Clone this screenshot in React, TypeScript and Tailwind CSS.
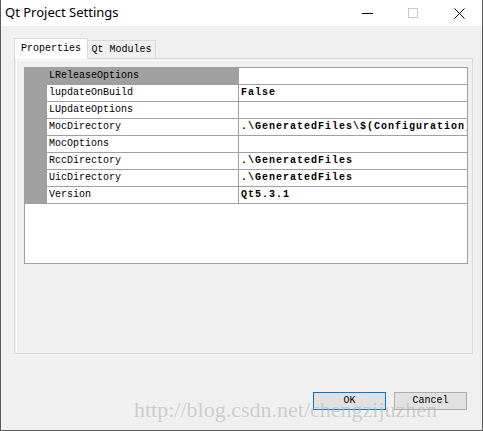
import React from "react";

const rows = [
  { name: "LReleaseOptions", value: "" },
  { name: "lupdateOnBuild", value: "False" },
  { name: "LUpdateOptions", value: "" },
  { name: "MocDirectory", value: ".\\GeneratedFiles\\$(Configuration)" },
  { name: "MocOptions", value: "" },
  { name: "RccDirectory", value: ".\\GeneratedFiles" },
  { name: "UicDirectory", value: ".\\GeneratedFiles" },
  { name: "Version", value: "Qt5.3.1" },
];

const mono = { fontFamily: '"Liberation Mono", "DejaVu Sans Mono", monospace' };

const App = () => {
  return (
    <div className="relative w-[483px] h-[431px] flex flex-col bg-[#f0f0f0] border-x border-b border-[#5b5b5b] overflow-hidden">
      {/* title bar */}
      <div className="h-[26px] bg-white flex items-center shrink-0">
        <span
          className="pl-[4px] text-[13px] text-black flex-1"
          style={{ fontFamily: '"Noto Sans", "Liberation Sans", sans-serif' }}
        >
          Qt Project Settings
        </span>
        <div className="flex h-full">
          <div className="w-[46px] flex items-center justify-center">
            <div className="w-[11px] h-px bg-black" />
          </div>
          <div className="w-[46px] flex items-center justify-center">
            <div className="w-[10px] h-[10px] border border-[#c8c8c8]" />
          </div>
          <div className="w-[46px] flex items-center justify-center">
            <svg width="11" height="11" viewBox="0 0 11 11">
              <path d="M0.5 0.5 L10.5 10.5 M10.5 0.5 L0.5 10.5" stroke="#000" strokeWidth="1" />
            </svg>
          </div>
        </div>
      </div>

      {/* tabs */}
      <div className="pl-[13px] pr-[9px] pt-[11px]" style={mono}>
        <div className="flex items-end h-[21px] text-[10px] text-black relative z-10">
          <div className="h-[21px] w-[74px] bg-white border-x border-t border-[#d9d9d9] flex items-center justify-center pb-[2px] -mb-px">
            Properties
          </div>
          <div className="h-[18px] w-[68px] bg-[#f0f0f0] border-r border-t border-[#d9d9d9] flex items-center justify-center">
            Qt Modules
          </div>
        </div>
        <div className="h-[296px] border border-[#d9d9d9] bg-[#f0f0f0] p-px">
          <div className="h-full border-l border-t border-white pl-[7px] pt-[6px]">
            <div className="w-[444px] h-[197px] border border-[#a0a0a0] bg-white flex flex-col">
              {rows.map((r, i) => (
                <div key={r.name} className="flex h-[17px] shrink-0">
                  <div className="w-[22px] bg-[#a0a0a0] shrink-0" />
                  <div
                    className={`w-[192px] shrink-0 border-r border-b border-[#a0a0a0] pl-[2px] text-[10px] leading-[16px] text-black ${
                      i === 0 ? "bg-[#a0a0a0]" : ""
                    }`}
                  >
                    {r.name}
                  </div>
                  <div className="flex-1 min-w-0 border-b border-[#a0a0a0] pl-[2px] text-[10px] leading-[16px] font-bold tracking-[1px] text-black whitespace-nowrap overflow-hidden">
                    {r.value}
                  </div>
                </div>
              ))}
            </div>
          </div>
        </div>
      </div>

      {/* buttons */}
      <div className="flex justify-end gap-[8px] pr-[15px] pt-[38px]" style={mono}>
        <button className="w-[73px] h-[18px] bg-[#e1e1e1] border border-[#0078d7] text-[10px] text-black leading-none">
          OK
        </button>
        <button className="w-[73px] h-[18px] bg-[#e1e1e1] border border-[#adadad] text-[10px] text-black leading-none">
          Cancel
        </button>
      </div>

      {/* watermark */}
      <div
        className="absolute left-[133px] top-[393px] text-[22px] text-[#b4b4b4]/60 pointer-events-none whitespace-nowrap"
        style={{ fontFamily: '"Liberation Serif", serif' }}
      >
        http://blog.csdn.net/chengzijuzhen
      </div>
    </div>
  );
};

export default App;
